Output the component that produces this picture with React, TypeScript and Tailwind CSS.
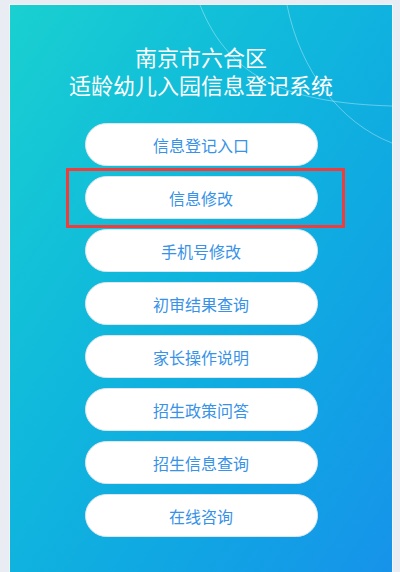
import React from 'react';

const entries = [
  '信息登记入口',
  '信息修改',
  '手机号修改',
  '初审结果查询',
  '家长操作说明',
  '招生政策问答',
  '招生信息查询',
  '在线咨询',
];

const font = { fontFamily: '"Noto Sans CJK SC", "Noto Sans", sans-serif' };

const App = () => {
  return (
    <div className="w-[400px] h-[572px] bg-[#e9ecf2] overflow-hidden" style={font}>
      <div className="relative ml-[10px] mt-[5px] w-[382px] h-[580px] overflow-hidden bg-linear-to-br from-[#1ad0d0] to-[#1792ea] outline outline-[#f4f6fa]">
        {/* decorative thin arcs */}
        <svg className="absolute inset-0 pointer-events-none" width="382" height="200" viewBox="0 0 382 200" fill="none">
          <path d="M190 0 C220 75 280 98 382 101" stroke="white" strokeOpacity="0.35" strokeWidth="1" />
          <path d="M277 0 C290 65 330 118 382 138" stroke="white" strokeOpacity="0.35" strokeWidth="1" />
        </svg>

        <div className="relative flex flex-col items-center pt-[37px]">
          <h1 className="text-[22px] text-white text-center font-normal">
            <span className="block leading-[28px]">南京市六合区</span>
            <span className="block leading-[28px]">适龄幼儿入园信息登记系统</span>
          </h1>

          <div className="mt-[25px] flex flex-col gap-[10px]">
            {entries.map((label, index) => (
              <div key={index} className="relative">
                <button className="w-[233px] h-[43px] rounded-full bg-white border border-[#dfe6ee] text-[16px] text-[#3792e8] flex items-center justify-center">
                  {label}
                </button>
                {index === 1 && (
                  <div className="absolute -left-[19px] -right-[27px] -top-[8px] -bottom-[9px] border-[3px] border-[#f23b3b] pointer-events-none" />
                )}
              </div>
            ))}
          </div>
        </div>
      </div>
    </div>
  );
};

export default App;
